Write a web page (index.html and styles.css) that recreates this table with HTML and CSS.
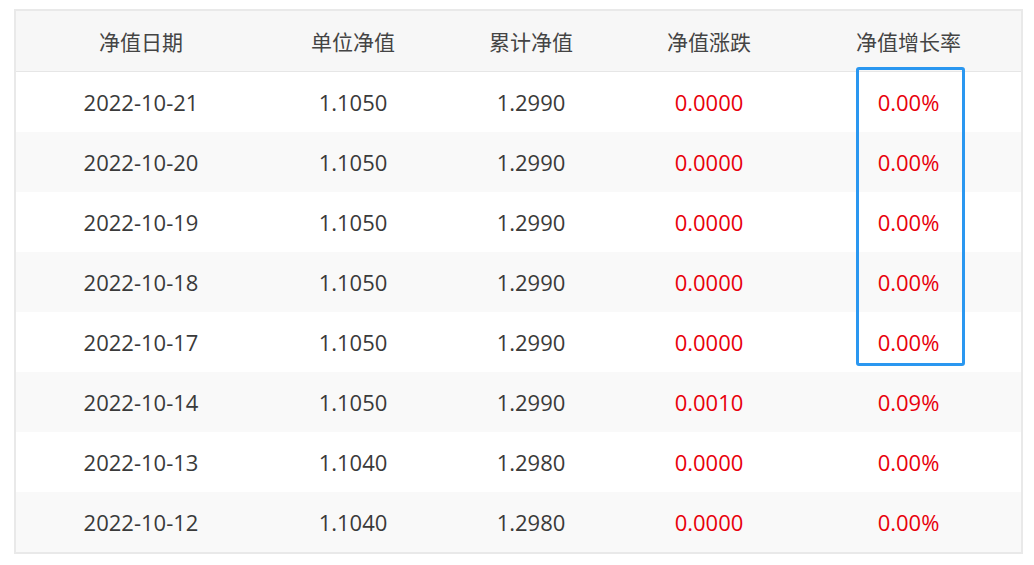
FILE: index.html
```html
<!DOCTYPE html>
<html lang="zh-CN">
<head>
<meta charset="utf-8">
<link rel="stylesheet" href="styles.css">
</head>
<body>
<div class="wrap">
  <table class="nav-table">
    <colgroup>
      <col class="c1"><col class="c2"><col class="c3"><col class="c4"><col class="c5">
    </colgroup>
    <thead>
      <tr><th>净值日期</th><th>单位净值</th><th>累计净值</th><th>净值涨跌</th><th>净值增长率</th></tr>
    </thead>
    <tbody>
      <tr><td>2022-10-21</td><td>1.1050</td><td>1.2990</td><td class="red">0.0000</td><td class="red">0.00%</td></tr>
      <tr><td>2022-10-20</td><td>1.1050</td><td>1.2990</td><td class="red">0.0000</td><td class="red">0.00%</td></tr>
      <tr><td>2022-10-19</td><td>1.1050</td><td>1.2990</td><td class="red">0.0000</td><td class="red">0.00%</td></tr>
      <tr><td>2022-10-18</td><td>1.1050</td><td>1.2990</td><td class="red">0.0000</td><td class="red">0.00%</td></tr>
      <tr><td>2022-10-17</td><td>1.1050</td><td>1.2990</td><td class="red">0.0000</td><td class="red">0.00%</td></tr>
      <tr><td>2022-10-14</td><td>1.1050</td><td>1.2990</td><td class="red">0.0010</td><td class="red">0.09%</td></tr>
      <tr><td>2022-10-13</td><td>1.1040</td><td>1.2980</td><td class="red">0.0000</td><td class="red">0.00%</td></tr>
      <tr><td>2022-10-12</td><td>1.1040</td><td>1.2980</td><td class="red">0.0000</td><td class="red">0.00%</td></tr>
    </tbody>
  </table>
  <div class="highlight"></div>
</div>
</body>
</html>
```
FILE: styles.css
```css
html, body {
  margin: 0;
  padding: 0;
  background: #fff;
}
body {
  padding: 9px 11px 0 14px;
  font-family: "Open Sans", "Noto Sans CJK SC", sans-serif;
}
.wrap {
  position: relative;
  width: 1009px;
}
.nav-table {
  width: 1009px;
  border-collapse: collapse;
  table-layout: fixed;
  border: 2px solid #e9e9e9;
  color: #3a3a3a;
  font-size: 22px;
}
.c1 { width: 251px; }
.c2 { width: 174px; }
.c3 { width: 182px; }
.c4 { width: 174px; }
.c5 { width: 226px; }
.nav-table th {
  height: 60px;
  padding: 0;
  font-weight: normal;
  background: #f7f7f7;
  border-bottom: 1px solid #e6e6e6;
  font-family: "Noto Sans CJK SC", sans-serif;
  font-size: 21px;
  color: #444;
}
.nav-table td {
  height: 60px;
  padding: 0;
  text-align: center;
}
.nav-table tbody tr:nth-child(even) td {
  background: #f9f9f9;
}
.nav-table td.red {
  color: #e8000b;
}
.highlight {
  position: absolute;
  left: 842px;
  top: 58px;
  width: 103px;
  height: 293px;
  border: 3px solid #2a97f0;
  border-radius: 3px;
}
```
